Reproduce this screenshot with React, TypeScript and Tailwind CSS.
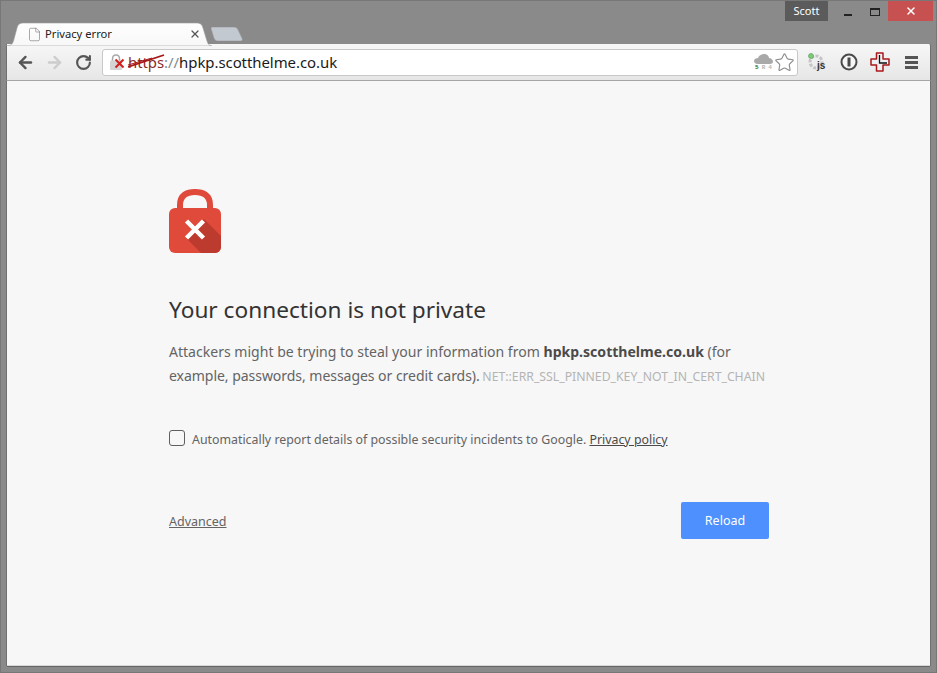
import { ArrowLeft, ArrowRight, RotateCw, Star, X, File } from 'lucide-react';

function TabShape() {
  return (
    <svg className="absolute inset-0" width="206" height="24" viewBox="0 0 206 24">
      <defs>
        <linearGradient id="tabfill" x1="0" y1="0" x2="0" y2="1">
          <stop offset="0" stopColor="#ffffff" />
          <stop offset="1" stopColor="#f7f7f7" />
        </linearGradient>
      </defs>
      <path d="M0 24 C6 24 7 21 8 17 L11 6 C12 2 14 1 18 1 L190 1 C194 1 196 2 197 6 L201 19 C202 22 203 24 206 24 Z" fill="url(#tabfill)" stroke="#9a9a9a" strokeWidth="0.6" />
    </svg>
  );
}

function LockError() {
  return (
    <svg width="52" height="64" viewBox="0 0 52 64">
      <path d="M11 22 V16 C11 6 18 3 26 3 C34 3 41 6 41 16 V22" fill="none" stroke="#e04a3b" strokeWidth="6" />
      <rect x="0" y="19" width="52" height="45" rx="6" fill="#e04a3b" />
      <path d="M35 30 L52 47 V58 C52 61 49 64 46 64 H32 L17 49 Z" fill="#bd3a2e" />
      <path d="M17.500 32 L34.500 49 M34.500 32 L17.500 49" stroke="#ffffff" strokeWidth="4.500" />
    </svg>
  );
}

function JsExtension() {
  return (
    <svg width="20" height="20" viewBox="0 0 20 20">
      <circle cx="9" cy="10" r="6" fill="none" stroke="#c4c4c4" strokeWidth="3" strokeDasharray="3 1.5" />
      <circle cx="4" cy="4" r="2.500" fill="#7fc97f" stroke="#5aa55a" strokeWidth="0.7" />
      <text x="10" y="17" fontSize="10" fontWeight="700" fill="#333" fontFamily="Liberation Sans, sans-serif">js</text>
    </svg>
  );
}

function CloudBadge() {
  return (
    <div className="flex flex-col items-center w-[19px] mt-[1px]">
      <svg width="19" height="10" viewBox="0 0 19 10">
        <path d="M4 10 C1 10 0 8 0 7 C0 5 2 4 4 4 C5 1 8 0 10 0 C13 0 15 2 15 4 C17 4 19 6 19 7.500 C19 9 18 10 16 10 Z" fill="#a9a9a9" />
      </svg>
      <div className="flex gap-[3px] text-[6px] leading-[7px] font-bold font-['Liberation_Mono',monospace]">
        <span className="text-[#3e6b10]">5</span>
        <span className="text-[#b5b5b5]">R</span>
        <span className="text-[#b5b5b5]">4</span>
      </div>
    </div>
  );
}

function PasswordIcon() {
  return (
    <svg width="18" height="18" viewBox="0 0 18 18">
      <circle cx="9" cy="9" r="7.500" fill="#f6f6f6" stroke="#4a4a4a" strokeWidth="2" />
      <rect x="7.500" y="4.500" width="3" height="9" fill="#4a4a4a" />
    </svg>
  );
}

function ClockCross() {
  return (
    <svg width="20" height="20" viewBox="0 0 20 20">
      <path d="M6.500 1 H13 V7 H19 V13 H13 V19 H6.500 V13 H1 V7 H6.500 Z" fill="#eef0f3" stroke="#a8191c" strokeWidth="1.500" strokeLinejoin="round" />
      <path d="M9.500 3 V11 H17" fill="none" stroke="#111" strokeWidth="1.300" />
    </svg>
  );
}

export default function App() {
  return (
    <div className="w-[937px] h-[673px] bg-[#8a8a8a] flex flex-col overflow-hidden font-['Open_Sans',sans-serif] border border-[#777]">
      <div className="h-[21px] flex justify-end pr-[3px] shrink-0">
        <div className="w-[43px] h-[20px] bg-[#5b5b5b] text-white text-[11px] leading-[20px] text-center font-['Noto_Sans',sans-serif]">Scott</div>
        <div className="w-[40px] flex items-center justify-center">
          <div className="w-[8px] h-[2px] bg-[#222] mt-[6px]" />
        </div>
        <div className="w-[14px] flex items-center justify-center">
          <div className="w-[10px] h-[8px] border border-[#222] border-t-2" />
        </div>
        <div className="w-[45px] h-[20px] bg-[#c75050] ml-[6px] flex items-center justify-center">
          <X size={12} strokeWidth={3} color="#fff" />
        </div>
      </div>

      <div className="h-[22px] shrink-0 flex items-end pl-[5px] relative z-10">
        <div className="relative w-[206px] h-[24px] -mb-[2px] flex items-center pl-[21px] pr-[9px] shrink-0">
          <TabShape />
          <File size={15} strokeWidth={1} color="#777" className="relative" />
          <span className="relative ml-[3px] text-[11.200px] text-[#222] font-['Noto_Sans',sans-serif] flex-1">Privacy error</span>
          <X size={12} strokeWidth={2.500} color="#555" className="relative mr-[2px]" />
        </div>
        <svg className="-ml-[1px] mb-[3px]" width="33" height="14" viewBox="0 0 33 15" preserveAspectRatio="none">
          <path d="M0 1.500 C0 0.500 1 0 2 0 L23 0 C25 0 26 1 27 3 L31 12 C32 14 31 15 29 15 L7 15 C5 15 4 14 3 12 Z" fill="#c3c9d1" stroke="#9b9b9b" strokeWidth="0.6" />
        </svg>
      </div>

      <div className="mx-[5px] h-[37px] shrink-0 bg-gradient-to-b from-[#f7f7f7] to-[#e6e6e6] flex items-center pl-[9px] pr-[9px] rounded-tr-[2px] border-b border-[#a5a5a5] border-x border-x-[#6f6f6f]">
        <ArrowLeft size={19} strokeWidth={3} color="#555" />
        <ArrowRight size={19} strokeWidth={3} color="#cdcdcd" className="ml-[10px]" />
        <RotateCw size={17} strokeWidth={3} color="#555" className="ml-[11px]" />
        <div className="ml-[10px] w-[696px] h-[27px] bg-white border border-[#c8c8c8] rounded-[3px] flex items-center pl-[6px] pr-[2px]">
          <div className="relative w-[17px] h-[17px] shrink-0">
            <svg width="17" height="17" viewBox="0 0 17 17">
              <path d="M3.500 7 V5 C3.500 2 5.500 1 7 1 C8.500 1 10.500 2 10.500 5 V7" fill="none" stroke="#a9a9a9" strokeWidth="1.500" />
              <rect x="1" y="6.500" width="12" height="9.500" rx="1" fill="#d5d5d5" />
              <path d="M6.500 5.500 L14.500 13.500 M14.500 5.500 L6.500 13.500" stroke="#d21f1f" strokeWidth="2" />
            </svg>
          </div>
          <div className="relative text-[14.950px] leading-[20px] ml-[2px] flex-1 font-['Noto_Sans',sans-serif] tracking-[-0.05px]">
            <span className="relative text-[#8a2a2a]">https<span className="absolute left-0 top-0 w-[37px] h-[18px]"><svg width="37" height="18" viewBox="0 0 37 18"><path d="M0 15 L36 3" stroke="#a81818" strokeWidth="1.800" /><path d="M0 13 L24 6" stroke="#a81818" strokeWidth="1" /></svg></span></span>
            <span className="text-[#7d8a93]">://</span>
            <span className="text-[#1a1a1a]">hpkp.scotthelme.co.uk</span>
          </div>
          <CloudBadge />
          <Star size={21} strokeWidth={1.300} color="#8e8e8e" fill="#fff" className="ml-[1px]" />
        </div>
        <div className="flex items-center ml-[9px]">
          <JsExtension />
          <div className="ml-[13px]"><PasswordIcon /></div>
          <div className="ml-[12px]"><ClockCross /></div>
          <div className="ml-[15px] w-[13px] flex flex-col gap-[2px]">
            <div className="h-[3px] bg-[#555]" />
            <div className="h-[3px] bg-[#555]" />
            <div className="h-[3px] bg-[#555]" />
          </div>
        </div>
      </div>

      <div className="mx-[6px] flex-1 bg-[#f7f7f7] pl-[162px] pt-[108px] border-b border-[#d8d8d8] mb-[6px] shadow-[0_1px_0_#666,-1px_0_0_#6f6f6f,1px_0_0_#6f6f6f]">
        <div className="w-[600px]">
          <LockError />
          <h1 className="mt-[41px] text-[22.650px] leading-[32px] text-[#333] font-normal font-['Noto_Sans',sans-serif]">Your connection is not private</h1>
          <p className="mt-[14px] text-[14.050px] leading-[24px] text-[#646464] font-['Noto_Sans',sans-serif]">
            Attackers might be trying to steal your information from <strong className="font-bold text-[#4a4a4a]">hpkp.scotthelme.co.uk</strong> (for <span className="tracking-[-0.06px]">example, passwords, messages or credit cards).</span>{' '}
            <span className="-ml-[1px] text-[12.250px] text-[#b4b4b4]">NET::ERR_SSL_PINNED_KEY_NOT_IN_CERT_CHAIN</span>
          </p>
          <div className="mt-[41px] flex items-start">
            <div className="w-[16px] h-[16px] border border-[#5f5f5f] rounded-[3px] mr-[7px] shrink-0" />
            <span className="text-[12.360px] leading-[20px] text-[#646464] font-['Noto_Sans',sans-serif]">
              Automatically report details of possible security incidents to Google. <a className="underline text-[#4a4a4a]">Privacy policy</a>
            </span>
          </div>
          <div className="mt-[52px] flex justify-between items-center">
            <a className="mt-[4px] underline text-[12.500px] text-[#646464] font-['Noto_Sans',sans-serif]">Advanced</a>
            <button className="w-[88px] h-[37px] pt-[2px] bg-[#4d90fe] text-white text-[12.500px] rounded-[2px] font-['Noto_Sans',sans-serif]">Reload</button>
          </div>
        </div>
      </div>
    </div>
  );
}
